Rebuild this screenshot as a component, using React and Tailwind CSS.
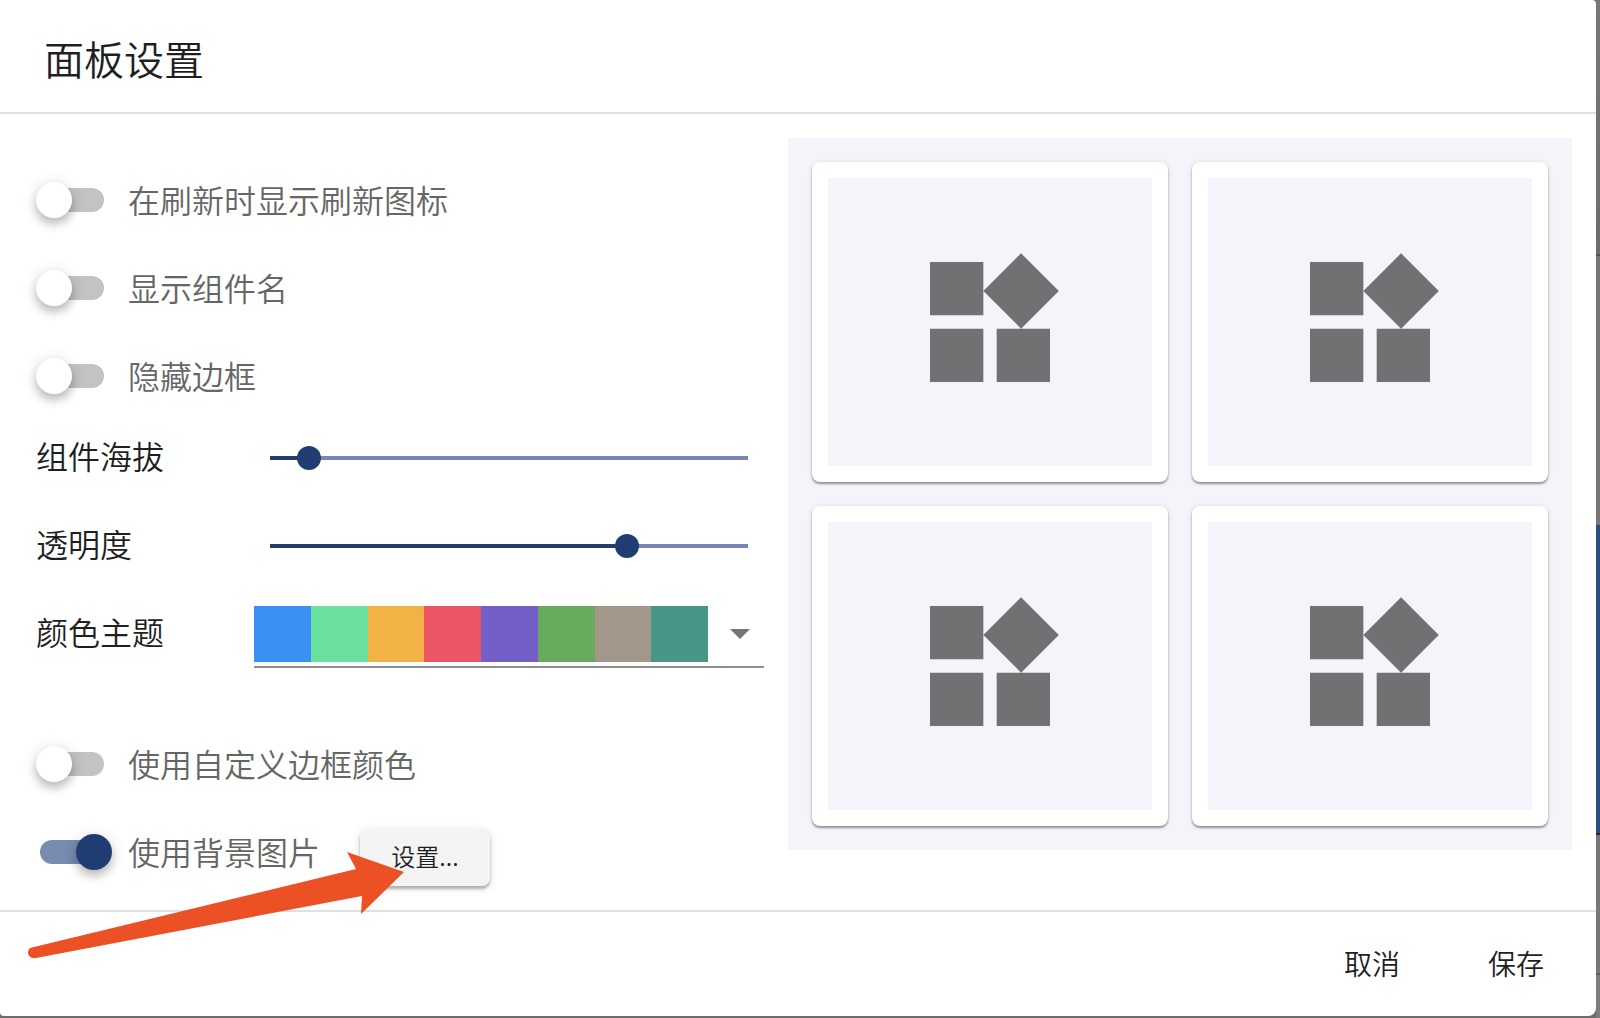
import { useState } from "react";

const THEME_COLORS = [
  "bg-[#3a90f3]",
  "bg-[#69e09d]",
  "bg-[#f2b246]",
  "bg-[#ec5564]",
  "bg-[#735fc7]",
  "bg-[#68ab5d]",
  "bg-[#a1978b]",
  "bg-[#48968a]",
];

function SwitchRow({ id, label, defaultChecked = false, children }) {
  return (
    <div className="flex h-20 items-center px-4">
      <input
        id={id}
        type="checkbox"
        role="switch"
        defaultChecked={defaultChecked}
        className="relative h-6 w-16 shrink-0 cursor-pointer appearance-none rounded-full bg-[#c3c3c3] before:absolute before:-left-1 before:-top-1.5 before:size-9 before:rounded-full before:bg-white before:shadow-[0_6px_8px_rgba(0,0,0,0.2),0_2px_16px_rgba(0,0,0,0.14)] checked:bg-[#778cb0] checked:before:left-9 checked:before:bg-[#1f3d73]"
      />
      <label htmlFor={id} className="ml-6 cursor-pointer whitespace-nowrap pb-0.5 text-[32px] leading-10 text-[#666666]">
        {label}
      </label>
      {children}
    </div>
  );
}

function SliderRow({ id, label, initial }) {
  const [value, setValue] = useState(initial);
  return (
    <div className="flex h-20 items-center pl-3">
      <label htmlFor={id} className="w-[218px] shrink-0 pb-1.5 text-[32px] leading-10">
        {label}
      </label>
      <div className="flex min-w-0 flex-1 px-4">
        <input
          id={id}
          type="range"
          min="0"
          max="100"
          value={value}
          onChange={(e) => setValue(Number(e.target.value))}
          style={{ "--fill": `${value}%` }}
          className="h-6 w-full cursor-pointer appearance-none bg-transparent [&::-webkit-slider-runnable-track]:h-1 [&::-webkit-slider-runnable-track]:bg-[linear-gradient(to_right,#233c68_var(--fill),#7684b8_var(--fill))] [&::-webkit-slider-thumb]:-mt-2.5 [&::-webkit-slider-thumb]:size-6 [&::-webkit-slider-thumb]:appearance-none [&::-webkit-slider-thumb]:rounded-full [&::-webkit-slider-thumb]:bg-[#1f3d73]"
        />
      </div>
    </div>
  );
}

function ThemeRow() {
  return (
    <div className="flex h-20 items-center pl-3">
      <label htmlFor="theme" className="w-[218px] shrink-0 pb-1.5 text-[32px] leading-10">
        颜色主题
      </label>
      <div className="relative min-w-0 flex-1">
        <div className="flex items-center border-b-2 border-[#8f8f8f] pb-1 pt-1.5">
          <div className="flex h-14 flex-1">
            {THEME_COLORS.map((color) => (
              <span key={color} className={`flex-1 ${color}`} />
            ))}
          </div>
          <svg className="ml-5.5 mr-3.5 h-2.5 w-5" viewBox="0 0 20 10" fill="#757575" aria-hidden="true">
            <path d="M0 0h20L10 10z" />
          </svg>
        </div>
        <select id="theme" className="absolute inset-0 size-full cursor-pointer opacity-0" />
      </div>
    </div>
  );
}

function PreviewCard() {
  return (
    <div className="rounded-lg bg-white p-4 shadow-[0_2px_2px_rgba(0,0,0,0.34),0_1px_5px_rgba(0,0,0,0.14)]">
      <div className="flex h-72 items-center justify-center bg-[#f4f5fb]">
        <svg className="size-40" viewBox="0 0 24 24" fill="#707173" aria-hidden="true">
          <path d="M13 13v8h8v-8h-8zM3 21h8v-8H3v8zM3 3v8h8V3H3zm13.66-1.31L11 7.34 16.66 13l5.66-5.66-5.66-5.65z" />
        </svg>
      </div>
    </div>
  );
}

export default function App() {
  return (
    <div className="flex min-h-screen bg-[#6d6d6e] font-['Noto_Sans_CJK_SC',sans-serif] font-[350] text-[#1f1f1f]">
      <main className="relative mb-0.5 flex min-w-0 flex-1 flex-col rounded-b-lg rounded-bl-sm rounded-tr-sm bg-white">
        <header className="flex h-[114px] items-center border-b-2 border-[#e0e0e0] px-11 pt-1">
          <h1 className="text-[40px] leading-[60px]">面板设置</h1>
        </header>

        <div className="grid flex-1 grid-cols-[185fr_196fr] items-start gap-6 px-6 pt-6">
          <section>
            <div className="flex flex-col gap-2 pt-5.5">
              <SwitchRow id="refresh-icon" label="在刷新时显示刷新图标" />
              <SwitchRow id="widget-name" label="显示组件名" />
              <SwitchRow id="hide-border" label="隐藏边框" />
            </div>
            <div className="mt-0.5 flex flex-col gap-2">
              <SliderRow id="elevation" label="组件海拔" initial={6} />
              <SliderRow id="opacity" label="透明度" initial={76} />
              <ThemeRow />
            </div>
            <div className="mt-12.5 flex flex-col gap-2 pb-4.5">
              <SwitchRow id="border-color" label="使用自定义边框颜色" />
              <SwitchRow id="background" label="使用背景图片" defaultChecked>
                <button
                  type="button"
                  className="mb-1.5 ml-10 h-14 w-[130px] self-end rounded-lg bg-[#f4f4f4] pb-1 text-2xl shadow-[0_3px_3px_rgba(0,0,0,0.26),0_1px_8px_rgba(0,0,0,0.14)]"
                >
                  设置...
                </button>
              </SwitchRow>
            </div>
          </section>

          <section aria-label="预览" className="grid grid-cols-2 gap-6 bg-[#f4f5fb] p-6">
            <PreviewCard />
            <PreviewCard />
            <PreviewCard />
            <PreviewCard />
          </section>
        </div>

        <footer className="flex h-[106px] items-center justify-end gap-4 border-t-2 border-[#e0e0e0] pr-4">
          <button type="button" className="h-16 w-32 pb-0.5 text-[28px]">
            取消
          </button>
          <button type="button" className="h-16 w-32 pb-0.5 text-[28px]">
            保存
          </button>
        </footer>

        <svg
          className="pointer-events-none absolute bottom-14 left-7 h-[108px] w-[378px]"
          viewBox="0 0 378 108"
          fill="#ec5025"
          aria-hidden="true"
        >
          <path d="M4 95.500L328 17 319 0 376 20 333 62 334 44 8 106Q1 107 0 101 0 96 4 95.500z" />
        </svg>
      </main>

      <aside className="flex w-1 shrink-0 flex-col" aria-hidden="true">
        <div className="h-64 border-b-2 border-[#55565a] bg-linear-to-b from-[#77777c] to-[#6c6d6c]" />
        <div className="flex-1 bg-[#777777]" />
        <div className="h-[310px] border-b-2 border-[#1b2a40] bg-[#27507f]" />
        <div className="h-35 border-b-2 border-[#5c5d60] bg-[#777777]" />
        <div className="h-[43px] bg-[#7c7c7e]" />
      </aside>
    </div>
  );
}
